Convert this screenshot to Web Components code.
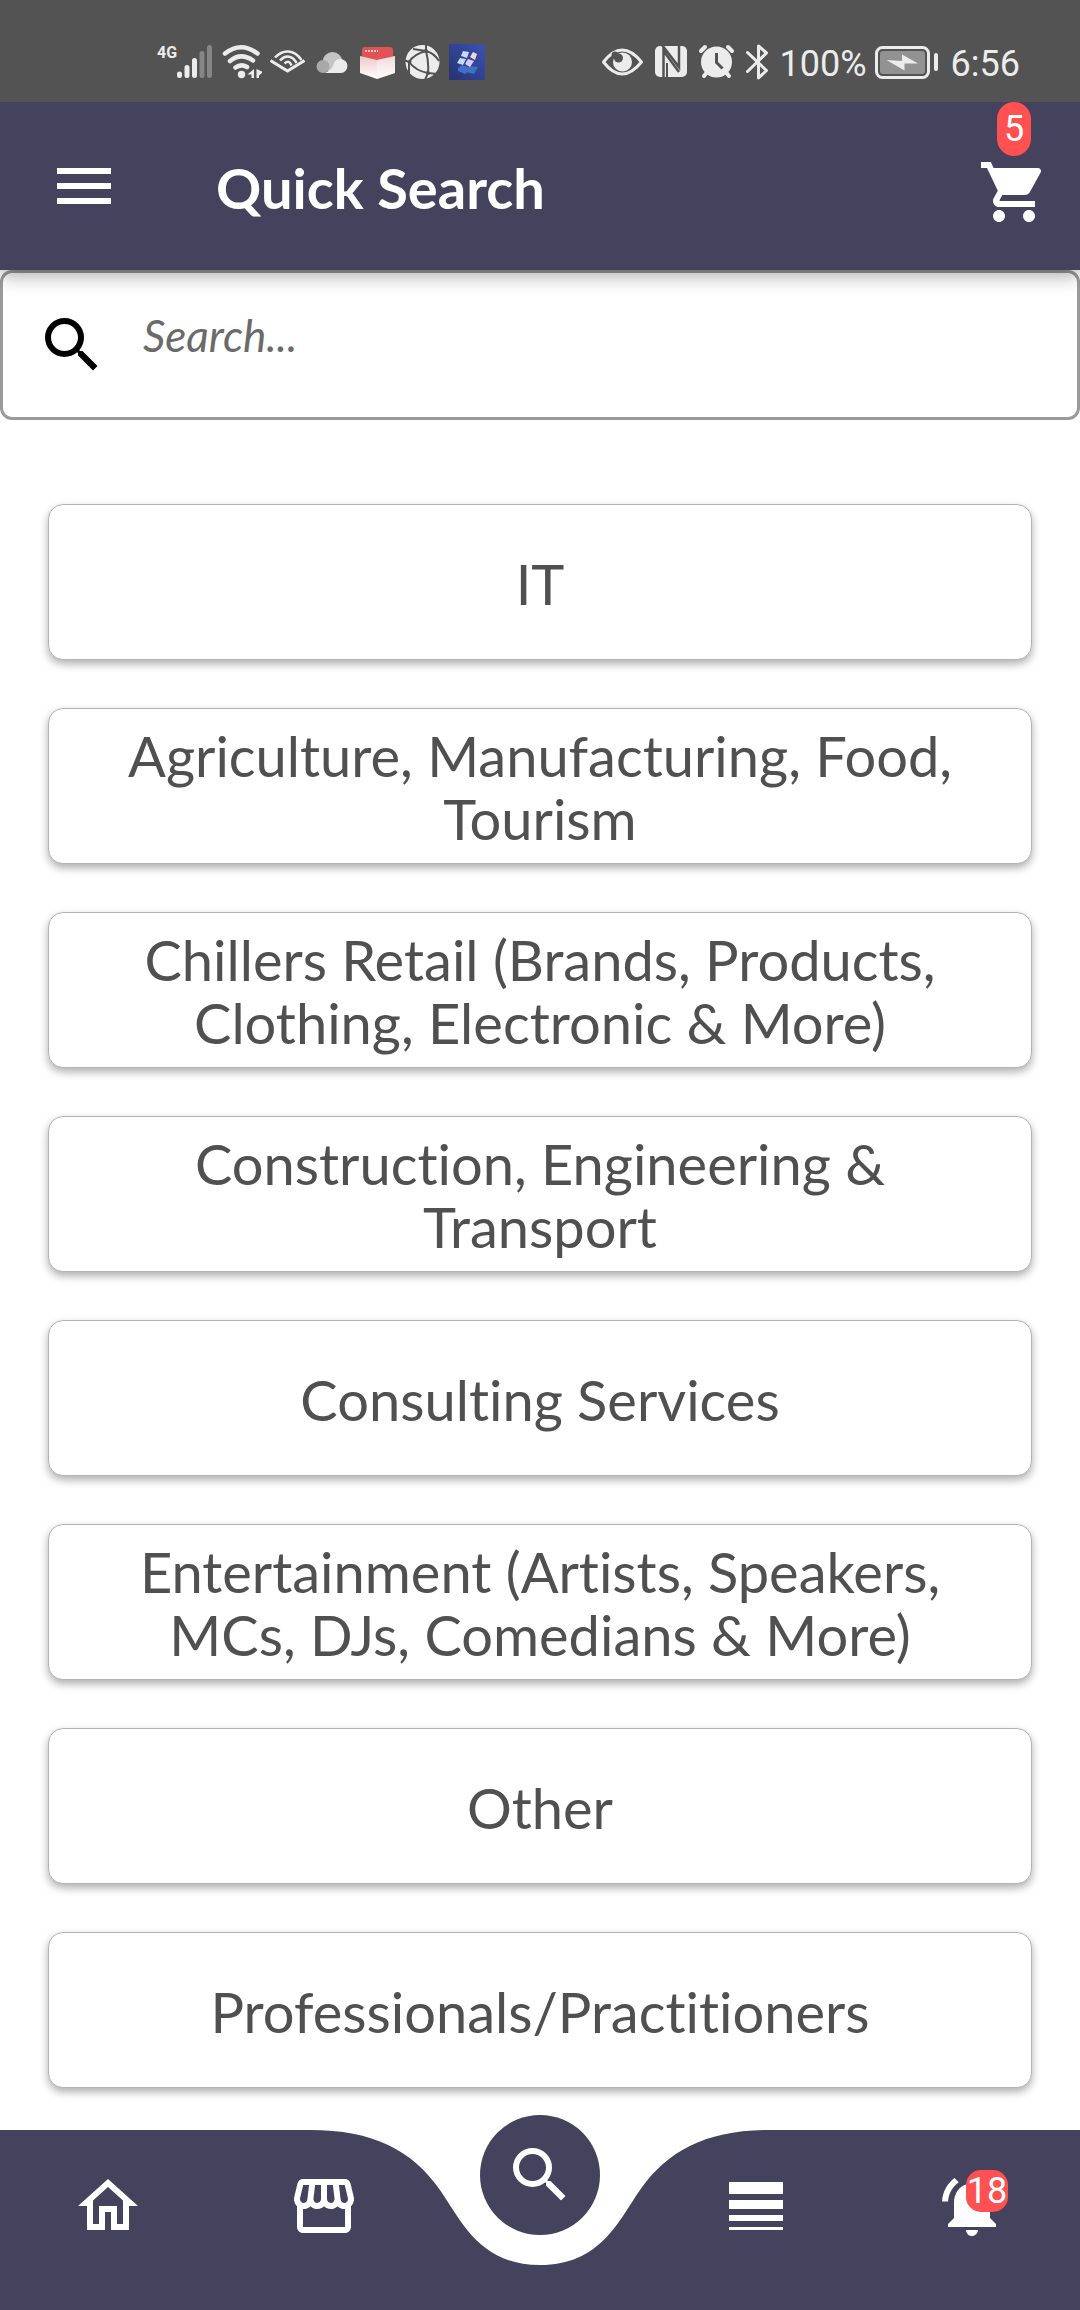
<!DOCTYPE html>
<html lang="en">
<head>
<meta charset="utf-8">
<meta name="viewport" content="width=device-width, initial-scale=1">
<title>Quick Search</title>
<style>
  html { --brand: #44425c; --badge: #ff5152; }
  body { margin: 0; background: #fff; font-family: Lato, "Liberation Sans", sans-serif; font-variant-ligatures: none; }
</style>
</head>
<body>
<quick-search-app></quick-search-app>

<script>
const define = (name, html, setup) => customElements.define(name, class extends HTMLElement {
  connectedCallback() {
    if (this.shadowRoot) return;
    this.attachShadow({ mode: 'open' }).innerHTML = html;
    if (setup) setup(this, this.shadowRoot);
  }
});

/* 24-unit interface glyphs */
const GLYPHS = {
  menu: 'M3 18h18v-2H3v2zm0-5h18v-2H3v2zm0-7v2h18V6H3z',
  search: 'M9.5 3A6.5 6.5 0 0 1 16 9.5C16 11.11 15.41 12.59 14.44 13.73L14.71 14H15.5L20.5 19L19 20.5L14 15.5V14.71L13.73 14.44C12.59 15.41 11.11 16 9.5 16A6.5 6.5 0 0 1 3 9.5A6.5 6.5 0 0 1 9.5 3M9.5 5C7 5 5 7 5 9.5C5 12 7 14 9.5 14C12 14 14 12 14 9.5C14 7 12 5 9.5 5Z',
  cart: 'M7 18c-1.1 0-1.99.9-1.99 2S5.9 22 7 22s2-.9 2-2-.9-2-2-2zM1 2v2h2l3.6 7.59-1.35 2.45c-.16.28-.25.61-.25.96 0 1.1.9 2 2 2h12v-2H7.42c-.14 0-.25-.11-.25-.25l.03-.12.9-1.63h7.45c.75 0 1.41-.41 1.75-1.03l3.58-6.49c.08-.14.12-.31.12-.48 0-.55-.45-1-1-1H5.21l-.94-2H1zm16 16c-1.1 0-1.99.9-1.99 2s.89 2 1.99 2 2-.9 2-2-.9-2-2-2z',
  home: 'M12 5.69L17 10.19V18H15V12H9V18H7V10.19L12 5.69M12 3L2 12H5V20H11V14H13V20H19V12H22Z',
  store: 'M21.9 8.89l-1.05-4.37c-.22-.9-1-1.52-1.91-1.52H5.05c-.9 0-1.69.63-1.9 1.52L2.1 8.89c-.24 1.02-.02 2.06.62 2.88.08.11.19.19.28.29V19c0 1.1.9 2 2 2h14c1.1 0 2-.9 2-2v-6.94c.09-.09.2-.18.28-.28.64-.82.87-1.87.62-2.89zm-2.99-3.9l1.05 4.37c.1.42.01.84-.25 1.17-.14.18-.44.47-.94.47-.61 0-1.14-.49-1.21-1.14L16.98 5l1.93-.01zM13 5h1.96l.54 4.52c.05.39-.07.78-.33 1.07-.22.26-.54.41-.95.41-.67 0-1.22-.59-1.22-1.31V5zM8.49 9.52L9.04 5H11v4.69c0 .72-.55 1.31-1.29 1.31-.34 0-.65-.15-.89-.41-.25-.29-.37-.68-.33-1.07zm-4.45-.16L5.05 5h1.97l-.58 4.86c-.08.65-.6 1.14-1.21 1.14-.49 0-.8-.29-.93-.47-.27-.32-.36-.75-.26-1.17zM5 19v-6.03c.08.01.15.03.23.03.87 0 1.66-.36 2.24-.95.6.6 1.4.95 2.31.95.87 0 1.65-.36 2.23-.93.59.57 1.39.93 2.29.93.84 0 1.64-.35 2.24-.95.58.59 1.37.95 2.24.95.08 0 .15-.02.23-.03V19H5z',
  lines: 'M3 4h18v4H3zM3 10h18v3H3zM3 15h18v2H3zM3 19h18v1H3z',
  bell: 'M7.58 4.08L6.15 2.65C3.75 4.48 2.17 7.3 2.03 10.5h2c.15-2.65 1.51-4.97 3.55-6.42zm12.39 6.42h2c-.15-3.2-1.73-6.02-4.12-7.85l-1.42 1.43c2.02 1.45 3.39 3.77 3.54 6.42zM18 11c0-3.07-1.64-5.64-4.5-6.32V4c0-.83-.67-1.5-1.5-1.5s-1.5.67-1.5 1.5v.68C7.63 5.36 6 7.92 6 11v5l-2 2v1h16v-1l-2-2v-5zm-6 11c.14 0 .27-.01.4-.04.65-.14 1.18-.58 1.44-1.18.1-.24.15-.5.15-.78h-4c.01 1.1.9 2 2.01 2z'
};

define('app-icon', `<style>:host{display:block;width:72px;height:72px}svg{display:block;width:100%;height:100%;fill:currentColor}</style>
<svg viewBox="0 0 24 24" aria-hidden="true"><path/></svg>`,
  (el, root) => root.querySelector('path').setAttribute('d', GLYPHS[el.getAttribute('name')]));

/* Status bar: every glyph is 36px high */
define('status-bar', `<style>
:host{display:flex;justify-content:space-between;align-items:center;box-sizing:border-box;height:102px;padding:22px 60px 0 157px;background:#535353;color:#ececec;position:relative;z-index:2;font-family:Roboto,"Liberation Sans",sans-serif}
div{display:flex;align-items:center;gap:8px}
svg{display:block;height:36px;flex:none}
.net{font:700 16px/18px Roboto,"Liberation Sans",sans-serif;align-self:flex-start;margin-right:-8px}
.text{font-size:36px;line-height:36px;padding-top:4px}
.time{margin-left:4px}
</style>
<div>
  <span class="net">4G</span>
  <svg width="37" viewBox="176 44 37 36" stroke="#ececec" stroke-width="5" stroke-linecap="round"><path d="M178.500 74v1.500M186 67.500v8M193.500 60.500v15"/><path stroke="#868686" d="M201 53.500v22M208.500 47.500v28"/></svg>
  <svg width="40" viewBox="221 44 40 36"><g fill="none" stroke="#ececec" stroke-width="4.500" stroke-linecap="round"><path d="M224 53.500Q240 41 256.500 53.500M229 61Q240 52 252 60.500M234.500 67.500Q240 63.500 246 67"/></g><circle cx="240.500" cy="74.500" r="3.700" fill="#ececec"/><path fill="#ececec" d="M253 69v9h-2.500v-3.500h-4zM255.500 69l6.500 3-4 3.500V78h-2.500z"/></svg>
  <svg width="35" viewBox="269 44 35 36" fill="none" stroke="#ececec"><path stroke-width="3" d="M269.500 60.500L286.500 71L303.500 60.500"/><path stroke-width="2.500" d="M274 57.500C282 49 293 49 300.500 60M279 60.500C285 54 292 56 295.500 63M283.500 63.500C287 60.500 289 61.500 290.500 65.500"/></svg>
  <svg width="38" viewBox="312 44 38 36"><circle cx="331.500" cy="62" r="10" fill="#c4c4c4"/><circle cx="322" cy="66.500" r="6.500" fill="#a9a9a9"/><path fill="#ececec" d="M324 73h16a7 7 0 0 0 1-13.800q-6-1-8 3.800-1 6-9 10z"/></svg>
  <svg width="38" viewBox="358 44 38 36"><defs><linearGradient id="box" x2="0" y2="1"><stop stop-color="#ecc9ca"/><stop offset="1" stop-color="#fff"/></linearGradient></defs><rect x="361" y="47" width="31" height="20" rx="3" fill="#e05256"/><path d="M364 51h13" stroke="#f8c9c9" stroke-width="2" stroke-dasharray="2 1"/><path fill="url(#box)" d="M359 56l17 4 18-4v17l-18 6-17-6z"/><path fill="#fff" opacity=".3" d="M376 60l18-4v17l-18 6z"/></svg>
  <svg width="36" viewBox="404 44 36 36"><circle cx="421.500" cy="62" r="17" fill="#ececec"/><path fill="none" stroke="#535353" stroke-width="2" d="M425 44v7Q428 62 427 73L424 80M425 51Q413 54 408 62L403 60M408 62Q415 71 427 73L436 74M425 51Q433 53 438 61M412 49L425 51M408 62L408 74"/><g fill="#535353"><circle cx="425" cy="51" r="2"/><circle cx="408.500" cy="62" r="2"/><circle cx="427" cy="73" r="2"/></g></svg>
  <svg width="36" viewBox="448 44 36 36"><defs><linearGradient id="sky" x1="1" x2="0" y2="1"><stop stop-color="#3c51b4"/><stop offset="1" stop-color="#26336f"/></linearGradient></defs><path fill="url(#sky)" d="M448 44h36v36h-36z"/><path fill="#416fc8" d="M457 68l4-3 6 2 1 4-4 3-7-3zM464 72l4-6 9 1-4 7-4-1z"/><path fill="#c4dcf8" d="M460 56l2-5 6 1-2 6zM456 63l3-5 6 1-3 6z"/><path fill="#f6d5cf" d="M469 57l3-5 4 2-2 6z"/><path fill="#d6cdf4" d="M464 64l3-5 6 2-4 6z"/></svg>
</div>
<div>
  <svg width="44" viewBox="602 44 44 36"><path fill="none" stroke="#ececec" stroke-width="3" stroke-linejoin="round" d="M604.500 62Q623 38 642.500 62Q623 86 604.500 62z"/><circle cx="623.500" cy="62" r="9.500" fill="#ececec"/><circle cx="619.500" cy="58" r="4.500" fill="#535353"/><circle cx="616" cy="55" r="3.500" fill="#535353"/></svg>
  <svg width="36" viewBox="654 44 36 36"><rect x="656" y="46" width="32" height="31" rx="5" fill="#ececec"/><path fill="none" stroke="#535353" stroke-width="2.500" d="M664.500 78V51L680 72M663 45l17 22V45"/><path fill="none" stroke="#535353" stroke-width="2" d="M668 63v14"/></svg>
  <svg width="39" viewBox="698 44 39 36"><circle cx="717.500" cy="62" r="15.500" fill="#ececec"/><path fill="none" stroke="#ececec" stroke-width="4" stroke-linecap="round" d="M702 51l4-4M729 47l4 4M705 76l4-5M730 76l-4-5"/><path fill="none" stroke="#535353" stroke-width="3" d="M717.500 53v9.500l6 6"/></svg>
  <svg width="28" viewBox="745 44 28 36"><path fill="none" stroke="#ececec" stroke-width="3" stroke-linecap="round" stroke-linejoin="round" d="M748.500 52.500L767.500 70.500L759.500 78V46L767.500 53L748.500 71.500"/></svg>
  <span class="text">100%</span>
  <svg width="64" viewBox="874 44 64 36"><rect x="875.500" y="47.500" width="52" height="30" rx="6" fill="none" stroke="#ececec" stroke-width="3"/><rect x="879" y="51" width="45" height="23" rx="3" fill="#929292"/><path fill="#ececec" d="M885.500 60L901 61V54.500L917 63.500 903.500 63.500V70.500z"/><path stroke="#ececec" stroke-width="4" stroke-linecap="round" d="M935 55v14"/></svg>
  <span class="text time">6:56</span>
</div>`);

define('count-badge', `<style>
:host{display:flex;align-items:center;justify-content:center;box-sizing:border-box;background:var(--badge);color:#fff;font:36px/42px Roboto,"Liberation Sans",sans-serif}
</style><slot></slot>`);

define('app-bar', `<style>
:host{display:flex;align-items:center;height:168px;background:var(--brand);color:#fff;padding:0 30px 0 48px;position:relative;z-index:1;box-shadow:0 6px 18px rgba(0,0,0,.32)}
button,a{display:block;border:0;padding:0;background:none;color:inherit;text-decoration:none}
h1{flex:1;margin:0 0 0 96px;padding-top:4px;font-size:56px;line-height:64px;font-weight:700}
a{display:flex;flex-direction:column;align-items:center;align-self:flex-start}
count-badge{width:34px;height:54px;border-radius:17px}
</style>
<button type="button" aria-label="Menu"><app-icon name="menu"></app-icon></button>
<h1><slot></slot></h1>
<a href="#cart" aria-label="Cart"><count-badge>5</count-badge><app-icon name="cart"></app-icon></a>`);

define('search-field', `<style>
:host{display:block;background:#fff}
label{display:flex;align-items:center;box-sizing:border-box;height:150px;gap:35px;padding:0 33px;border:3px solid #9b9b9b;border-radius:12px;color:#000}
input{flex:1;min-width:0;height:100%;box-sizing:border-box;border:0;outline:0;padding:0 0 20px;background:none;font:italic 44px/50px Lato,"Liberation Sans",sans-serif;color:#333}
input::placeholder{color:#6a6a6a;opacity:1}
</style>
<label><app-icon name="search"></app-icon><input type="text" placeholder="Search..." aria-label="Search"></label>`);

define('category-button', `<style>
:host{display:block}
button{display:flex;align-items:center;justify-content:center;width:100%;min-height:156px;box-sizing:border-box;padding:14px 60px 12px;border:1px solid #b4b4b4;border-radius:15px;background:#fff;box-shadow:0 4px 8px rgba(0,0,0,.32);color:#505050;font:56px/63px Lato,"Liberation Sans",sans-serif;font-variant-ligatures:none;text-align:center}
</style><button type="button"><span><slot></slot></span></button>`);

define('category-list', `<style>
:host{display:flex;flex-direction:column;gap:48px;padding:84px 48px 42px}
</style><slot></slot>`);

/* Bottom bar: the notch stays centred while the side panels take the spare width */
define('bottom-nav', `<style>
:host{display:grid;color:#fff}
.shape,nav{grid-area:1/1}
.shape{display:flex;height:180px}
.shape i{flex:1;background:var(--brand)}
.shape svg{display:block;width:460px;height:180px;fill:var(--brand)}
nav{display:grid;grid-template-columns:repeat(5,1fr);justify-items:center;align-items:start;padding-top:40px}
a{display:block;color:inherit;text-decoration:none}
.main{display:flex;align-items:center;justify-content:center;width:120px;height:120px;margin-top:-55px;border-radius:50%;background:var(--brand)}
.alerts{position:relative}
count-badge{position:absolute;top:0;right:0;width:42px;height:42px;border-radius:15px}
</style>
<div class="shape"><i></i><svg viewBox="0 0 460 180" aria-hidden="true"><path d="M0 0C63 0 102 20 130 60C152 92 170 135 230 135C290 135 308 92 330 60C358 20 397 0 460 0V180H0z"/></svg><i></i></div>
<nav>
  <a href="#home" aria-label="Home"><app-icon name="home"></app-icon></a>
  <a href="#store" aria-label="Store"><app-icon name="store"></app-icon></a>
  <a href="#search" class="main" aria-label="Quick search"><app-icon name="search"></app-icon></a>
  <a href="#list" aria-label="Listings"><app-icon name="lines"></app-icon></a>
  <a href="#alerts" class="alerts" aria-label="Notifications"><app-icon name="bell"></app-icon><count-badge>18</count-badge></a>
</nav>`);

define('quick-search-app', `<style>
:host{display:flex;flex-direction:column;min-height:100vh}
category-list{flex:1}
</style>
<status-bar></status-bar>
<app-bar>Quick Search</app-bar>
<search-field></search-field>
<category-list>
  <category-button>IT</category-button>
  <category-button>Agriculture, Manufacturing, Food, Tourism</category-button>
  <category-button>Chillers Retail (Brands, Products, Clothing, Electronic &amp; More)</category-button>
  <category-button>Construction, Engineering &amp; Transport</category-button>
  <category-button>Consulting Services</category-button>
  <category-button>Entertainment (Artists, Speakers, MCs, DJs, Comedians &amp; More)</category-button>
  <category-button>Other</category-button>
  <category-button>Professionals/Practitioners</category-button>
</category-list>
<bottom-nav></bottom-nav>`);
</script>
</body>
</html>
